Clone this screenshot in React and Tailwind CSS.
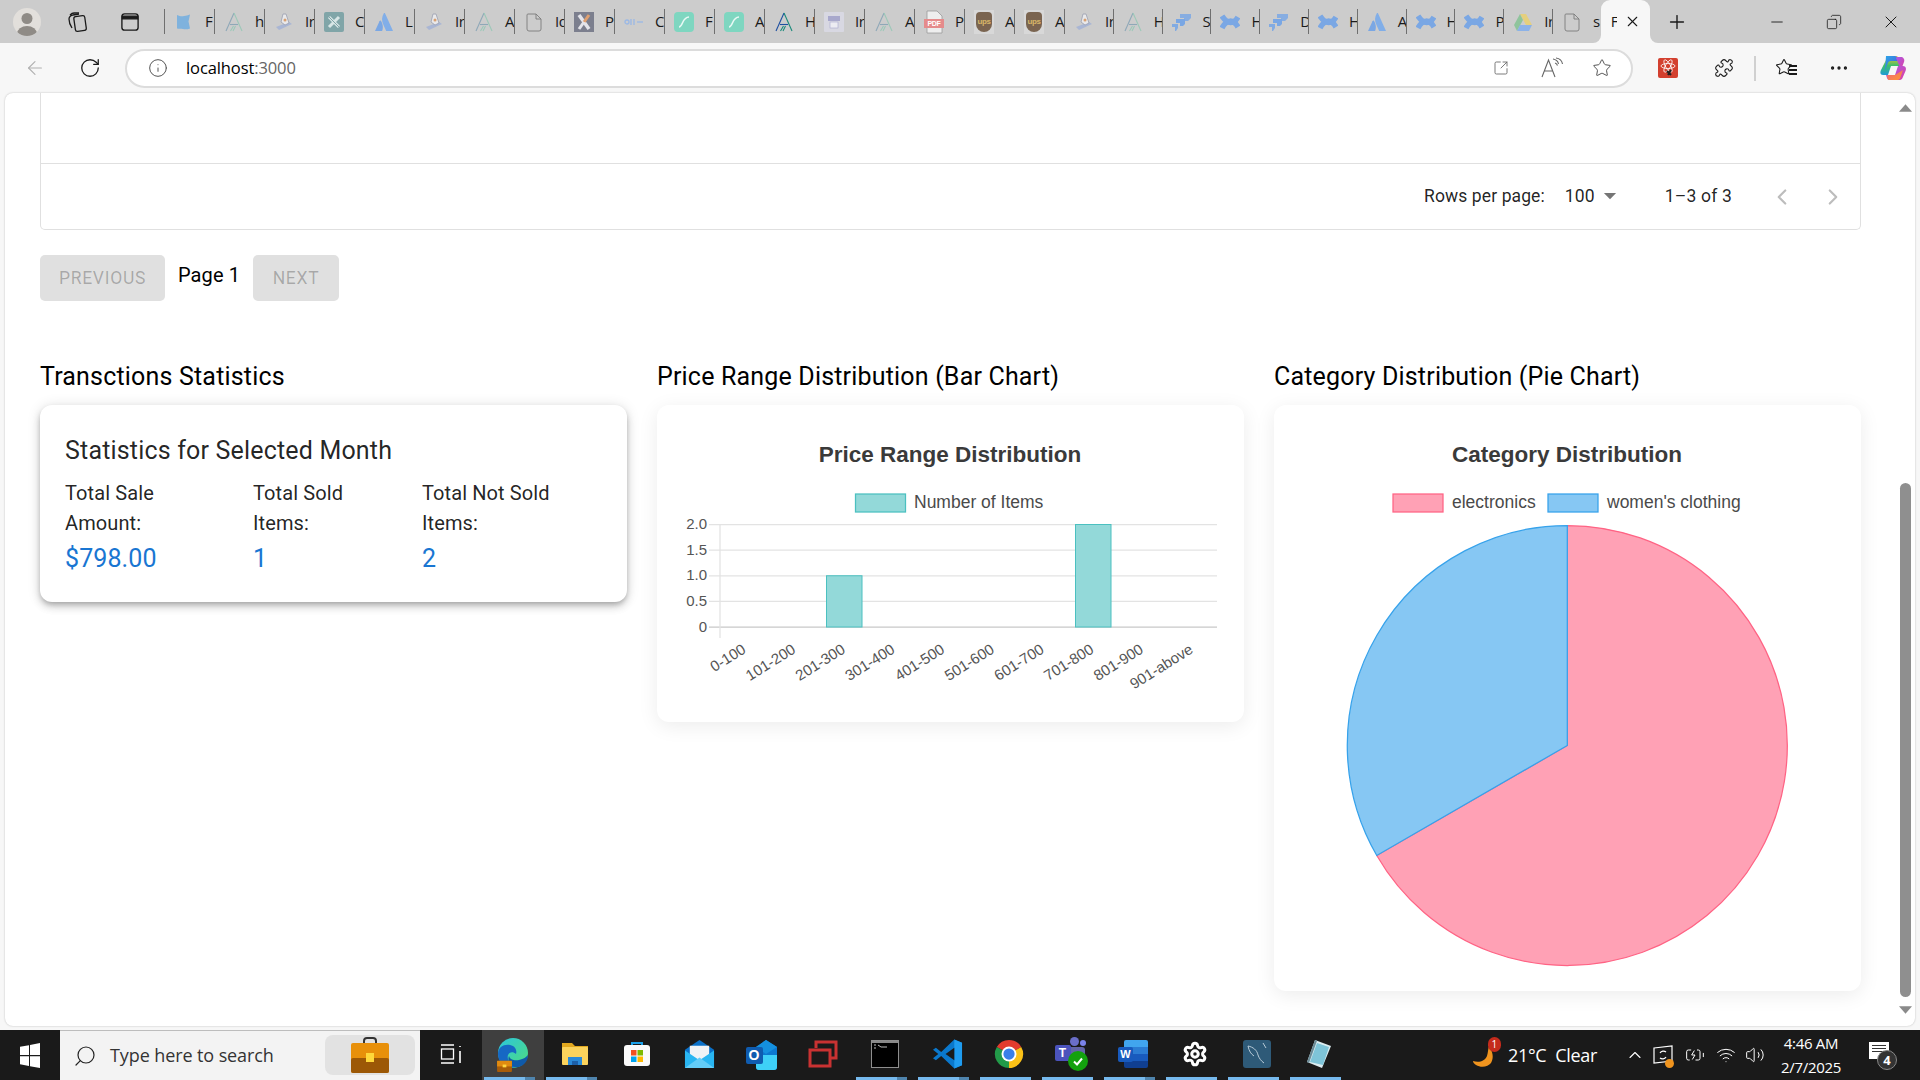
import React from "react";
import {
  ArrowLeft, RotateCw, Info, SquareArrowOutUpRight, Star, Puzzle, MoreHorizontal, Search,
  ChevronLeft, ChevronRight, Plus, X, Minus, Copy, ChevronUp, Wifi, Volume2, BatteryCharging, Settings,
} from "lucide-react";

const Flag = () => (
  <svg viewBox="0 0 20 20" className="w-5 h-5"><path d="M3 3c3 1.500 5 1.500 7 1s4-.5 6-1.500l-1.500 7 1.500 7c-3 1-5 1-7 .5s-4 0-6-.5z" fill="#7fb2dd" /></svg>
);
const ALogo = ({ c = "#8fa8b8", d = "#9cc8b8" }) => (
  <svg viewBox="0 0 20 20" className="w-5 h-5" fill="none" strokeWidth="1.100">
    <path d="M10 1 L2 19" stroke={c} /><path d="M10 1 L18 19" stroke={d} />
    <path d="M6 12.500h8" stroke={c} /><path d="M6.500 19l3-5M9 19l2.500-5" stroke={d} />
  </svg>
);
const Flask = () => (
  <svg viewBox="0 0 20 20" className="w-5 h-5">
    <path d="M2 15l13-5 3 2-13 6z" fill="#a9b6d4" />
    <path d="M9 2h3l3 9-4 2-4-3z" fill="#e8e8ea" stroke="#9a9fb0" strokeWidth=".8" />
    <circle cx="11" cy="8" r="1.500" fill="#d8a070" />
  </svg>
);
const XSquare = () => (
  <svg viewBox="0 0 20 20" className="w-5 h-5">
    <rect width="20" height="20" rx="2" fill="#80a5a8" />
    <path d="M5 5l10 10M15 5L5 15" stroke="#d8e6e6" strokeWidth="3" />
    <path d="M5 5l10 10" stroke="#80a5a8" strokeWidth="1" />
  </svg>
);
const Atl = () => (
  <svg viewBox="0 0 20 20" className="w-5 h-5">
    <path d="M7 9c-.5-.6-1-.5-1.500.3L1 19h7c1-2 1.500-6-1-10z" fill="#7aa7e4" />
    <path d="M10 1c-2.500 4-2.500 8-.5 12l2.700 6H19L11 1.300c-.3-.5-.7-.5-1-.3z" fill="#81aee8" />
  </svg>
);
const Doc = () => (
  <svg viewBox="0 0 20 20" className="w-5 h-6" fill="none" stroke="#7c7c7c" strokeWidth=".9">
    <path d="M4 2h8l5 5v10a2 2 0 0 1-2 2H5a2 2 0 0 1-2-2V3a1 1 0 0 1 1-1z" /><path d="M12 2v5h5" />
  </svg>
);
const XGray = () => (
  <svg viewBox="0 0 20 20" className="w-5 h-5">
    <rect width="20" height="20" fill="#7c7f8e" />
    <path d="M5 3l10 14" stroke="#e4e4ea" strokeWidth="3.500" />
    <path d="M15 3L10 10" stroke="#e0a070" strokeWidth="3" /><path d="M10 10l-5 7" stroke="#e4e4ea" strokeWidth="3" />
  </svg>
);
const Dots = () => (
  <svg viewBox="0 0 20 20" className="w-5 h-5" fill="none" stroke="#9ab8e6" strokeWidth="1.300">
    <circle cx="3" cy="10" r="2" /><path d="M7 7v6M10 7v6" /><path d="M13 10h6" />
  </svg>
);
const SGreen = () => (
  <svg viewBox="0 0 20 20" className="w-5 h-6">
    <rect width="20" height="20" y="0" rx="4" fill="#7ed6c0" />
    <path d="M5 15c4 0 3-10 10-10" fill="none" stroke="#e8f8f4" strokeWidth="1.600" />
  </svg>
);
const Robot = () => (
  <svg viewBox="0 0 20 20" className="w-5 h-5">
    <rect width="20" height="20" rx="1" fill="#d8d8e2" />
    <rect x="4" y="4" width="12" height="5" fill="#a8a8cc" /><rect x="6" y="10" width="8" height="6" fill="#ececf2" stroke="#a8a8cc" strokeWidth=".6" />
  </svg>
);
const Pdf = () => (
  <div className="relative w-5 h-6">
    <svg viewBox="0 0 20 24" className="w-5 h-6"><path d="M3 1h10l5 5v17H3z" fill="#eee" stroke="#999" strokeWidth=".8" /></svg>
    <div className="absolute left-0 top-[9px] w-5 h-[9px] bg-[#e58b8b] text-white text-[7px] leading-[9px] font-bold text-center font-['Liberation_Sans',sans-serif]">PDF</div>
  </div>
);
const Ups = () => (
  <div className="w-5 h-6 bg-[#d8d8d8] flex items-center justify-center">
    <div className="w-4 h-5 rounded-b-lg rounded-t-sm bg-[#7a6450] text-[#d8b668] text-[8px] leading-5 font-bold text-center font-['Liberation_Sans',sans-serif]">ups</div>
  </div>
);
const Arrows = () => (
  <svg viewBox="0 0 20 20" className="w-5 h-5" fill="#7aa7e4">
    <path d="M8 2h11v4l-3 3h-4V6H8z" opacity=".85" /><path d="M4 7h9v5l-2 2H8v-3H4z" /><path d="M0 12h6v4l-2 3H3v-4H0z" opacity=".9" />
  </svg>
);
const Conf = () => (
  <svg viewBox="0 0 20 20" className="w-5 h-5" fill="none" stroke="#7aa7e4" strokeWidth="5.500">
    <path d="M2 16c5-9 11-9 16-1" /><path d="M2 4c6 9 12 8 16 1" />
  </svg>
);
const Drive = () => (
  <svg viewBox="0 0 20 20" className="w-5 h-5">
    <path d="M7 2h6l6 11h-6z" fill="#e5cf7d" /><path d="M7 2l3 6-6 11-3-6z" fill="#8fc49c" /><path d="M4 19l3-6h12l-3 6z" fill="#8cb2e8" />
  </svg>
);

const tabs = [
  [Flag, "F"], [ALogo, "h"], [Flask, "Ir"], [XSquare, "C"], [Atl, "L"], [Flask, "Ir"], [ALogo, "A"], [Doc, "Id"], [XGray, "P"],
  [Dots, "C"], [SGreen, "F"], [SGreen, "A"], ["A2", "H"], [Robot, "Ir"], [ALogo, "A"], [Pdf, "P"], [Ups, "A"], [Ups, "A"],
  [Flask, "Ir"], [ALogo, "H"], [Arrows, "S"], [Conf, "H"], [Arrows, "D"], [Conf, "H"], [Atl, "A"], [Conf, "H"], [Conf, "P"], [Drive, "Ir"], [Doc, "s"],
];

function TabStrip() {
  return (
    <div className="h-[43px] bg-[#cccccc] flex items-center shrink-0 relative">
      <div className="w-[54px] flex justify-center">
        <svg viewBox="0 0 28 28" className="w-7 h-7">
          <defs><clipPath id="av"><circle cx="14" cy="14" r="14" /></clipPath></defs>
          <circle cx="14" cy="14" r="14" fill="#e2dfdb" />
          <g clipPath="url(#av)" fill="#8f8b86"><circle cx="14" cy="10.500" r="5.500" /><ellipse cx="14" cy="26" rx="10" ry="8" /></g>
        </svg>
      </div>
      <div className="w-[46px] flex justify-center">
        <svg viewBox="0 0 24 24" className="w-6 h-6" fill="none" stroke="#1a1a1a" strokeWidth="1.300">
          <rect x="9.500" y="6" width="11" height="15" rx="2" transform="rotate(-8 15 13)" />
          <path d="M7 18c-2-3-3-6-3-9 0-2 2-4 4-4l6-1" /><path d="M5 5c1-1 2-2 4-2l5 0" />
        </svg>
      </div>
      <div className="w-[60px] flex justify-center">
        <svg viewBox="0 0 20 20" className="w-[18px] h-[18px]" fill="none" stroke="#1a1a1a" strokeWidth="1.500">
          <rect x="1" y="1" width="18" height="18" rx="3" /><path d="M1.500 3.500h17v3h-17z" fill="#1a1a1a" />
        </svg>
      </div>
      <div className="w-[4px]" />
      {tabs.map(([Ic, t], i) => (
        <div key={i} className={`${i < 18 ? "w-[50px]" : "w-[48.800px]"} h-full flex items-center overflow-hidden shrink-0 font-['Open_Sans',sans-serif] text-[15px] tracking-[-0.400px] text-[#1a1a1a]`}>
          <span className="w-px h-[25px] bg-[#6f6f6f] shrink-0" />
          <span className="ml-[9px] w-5 flex justify-center shrink-0">
            {Ic === "A2" ? <ALogo c="#1e4fa0" d="#1a8a7a" /> : <Ic />}
          </span>
          <span className="ml-[11px] whitespace-nowrap">{t}</span>
        </div>
      ))}
      <div className="w-[49px] h-full bg-[#f7f7f7] rounded-t-[9px] flex items-center shrink-0 relative font-['Open_Sans',sans-serif] text-[15px] text-[#1a1a1a]">
        <span className="ml-[10px] w-[6px] overflow-hidden">F</span>
        <X className="ml-[7px] w-[17px] h-[17px]" strokeWidth={1.500} />
        <div className="absolute -left-[8px] bottom-0 w-2 h-2 bg-[#f7f7f7]"><div className="w-2 h-2 bg-[#cccccc] rounded-br-[8px]" /></div>
        <div className="absolute -right-[8px] bottom-0 w-2 h-2 bg-[#f7f7f7]"><div className="w-2 h-2 bg-[#cccccc] rounded-bl-[8px]" /></div>
      </div>
      <div className="w-[55px] flex justify-center"><Plus className="w-[22px] h-[22px] text-[#1a1a1a]" strokeWidth={1.500} /></div>
      <div className="flex-1" />
      <div className="w-[57px] flex justify-center"><Minus className="w-[18px] h-[18px] text-[#1a1a1a]" strokeWidth={1.200} /></div>
      <div className="w-[57px] flex justify-center"><Copy className="w-4 h-4 text-[#1a1a1a] -scale-x-100" strokeWidth={1.200} /></div>
      <div className="w-[58px] flex justify-center"><X className="w-5 h-5 text-[#1a1a1a]" strokeWidth={1.200} /></div>
    </div>
  );
}

function Toolbar() {
  return (
    <div className="h-[50px] bg-[#f7f7f7] flex items-center shrink-0">
      <div className="w-[70px] flex justify-center"><ArrowLeft className="w-[22px] h-[22px] text-[#b0b0b0]" strokeWidth={1.200} /></div>
      <div className="w-[40px] flex justify-center"><RotateCw className="w-[22px] h-[22px] text-[#1a1a1a]" strokeWidth={1.400} /></div>
      <div className="ml-[15px] w-[1508px] h-[39px] rounded-full border-2 border-[#dcdcdc] bg-white flex items-center">
        <Info className="ml-[21px] w-5 h-5 text-[#555]" strokeWidth={1.200} />
        <span className="ml-[18px] font-['Open_Sans',sans-serif] text-[16.500px] text-black tracking-[-0.100px]">localhost<span className="text-[#666]">:3000</span></span>
        <div className="flex-1" />
        <SquareArrowOutUpRight className="w-[16px] h-[16px] text-[#666]" strokeWidth={1.300} />
        <svg viewBox="0 0 24 22" className="ml-[31px] w-[24px] h-[22px]" fill="none" stroke="#666" strokeWidth="1.100">
          <path d="M2 20L8.500 3 15 20M4.500 14h8" /><path d="M13 2c3 .5 5 2.500 5.500 5M15 6c1.500.3 2 1 2.500 2.500M16 1c4 .5 6 3 6.500 6" />
        </svg>
        <Star className="ml-[28px] w-5 h-5 text-[#555]" strokeWidth={1.200} />
        <div className="w-[19px]" />
      </div>
      <div className="ml-[25px] w-[20px] h-[20px] rounded-[2px] bg-[#d3402f] flex items-center justify-center">
        <svg viewBox="0 0 20 20" className="w-5 h-5" fill="none" stroke="#fff" strokeWidth=".8">
          <ellipse cx="10" cy="8" rx="7" ry="2.500" /><ellipse cx="10" cy="8" rx="7" ry="2.500" transform="rotate(60 10 8)" /><ellipse cx="10" cy="8" rx="7" ry="2.500" transform="rotate(120 10 8)" />
          <path d="M9 13l4 4M13 12l-3 5" stroke="#222" strokeWidth="2" />
        </svg>
      </div>
      <div className="w-[36px]" />
      <Puzzle className="w-[20px] h-[20px] text-[#1a1a1a]" strokeWidth={1.300} />
      <div className="ml-[20px] w-[2px] h-[25px] bg-[#d0d0d0]" />
      <div className="ml-[19px] relative w-5 h-5">
        <Star className="w-[18px] h-[18px] text-[#1a1a1a]" strokeWidth={1.400} />
        <span className="absolute right-[-2px] top-[7px] w-[8px] h-[1.500px] bg-[#1a1a1a]" />
        <span className="absolute right-[-2px] top-[11px] w-[8px] h-[1.500px] bg-[#1a1a1a]" />
        <span className="absolute right-[-2px] top-[15px] w-[8px] h-[1.500px] bg-[#1a1a1a]" />
      </div>
      <MoreHorizontal className="ml-[33px] w-[22px] h-[22px] text-[#1a1a1a]" strokeWidth={1.600} />
      <div className="ml-[29px]">
        <svg viewBox="0 0 28 28" className="w-[28px] h-[28px]">
          <defs>
            <linearGradient id="cp1" x1="0" y1="0" x2="1" y2="1"><stop offset="0" stopColor="#2aa7e8" /><stop offset="1" stopColor="#4a55d8" /></linearGradient>
            <linearGradient id="cp2" x1="0" y1="0" x2="0" y2="1"><stop offset="0" stopColor="#ffc22e" /><stop offset=".5" stopColor="#3fc06a" /><stop offset="1" stopColor="#1f9ad6" /></linearGradient>
            <linearGradient id="cp3" x1="0" y1="0" x2="1" y2="1"><stop offset="0" stopColor="#a65be8" /><stop offset="1" stopColor="#e040a0" /></linearGradient>
            <linearGradient id="cp4" x1="0" y1="0" x2="1" y2="1"><stop offset="0" stopColor="#f06080" /><stop offset="1" stopColor="#ff9a30" /></linearGradient>
          </defs>
          <path d="M9 2h8c1 0 2 .5 2.500 2L22 12H12L9 21H4c-3 0-3-3-2-5z" fill="url(#cp2)" />
          <path d="M7 2h9c1 0 2 .8 2.500 2l1 3H12c-2 0-3 1-3.500 3L6 16z" fill="url(#cp1)" />
          <path d="M17 4l5 12 3-8c1-3-1-5-3-5h-4z" fill="url(#cp3)" />
          <path d="M20 26h-9c-2 0-2.500-1-3-2l-1-3h9l3-9h5c3 0 3.500 3 2.500 5l-3 7c-.5 1.500-2 2-3.500 2z" fill="url(#cp3)" />
          <path d="M10 26h8c2 0 3-1 3.500-3L24 16l-8 5H8c0 3 1 5 2 5z" fill="url(#cp4)" />
        </svg>
      </div>
    </div>
  );
}

function Pagination() {
  return (
    <div className="flex-1 flex items-center justify-end text-[17.500px] text-[rgba(0,0,0,0.87)]">
      <span className="tracking-[0.100px]">Rows per page:</span>
      <span className="ml-[20px] tracking-[0.100px]">100</span>
      <svg viewBox="0 0 14 8" className="ml-[8px] w-[14px] h-[7px]"><path d="M0 0h14L7 7z" fill="#757575" /></svg>
      <span className="ml-[48px] tracking-[0.200px]">1–3 of 3</span>
      <ChevronLeft className="ml-[37px] w-[26px] h-[26px] text-[#bdbdbd]" strokeWidth={2} />
      <ChevronRight className="ml-[25px] mr-[14px] w-[26px] h-[26px] text-[#bdbdbd]" strokeWidth={2} />
    </div>
  );
}

const labels = ["0-100", "101-200", "201-300", "301-400", "401-500", "501-600", "601-700", "701-800", "801-900", "901-above"];

function BarChart() {
  const x0 = 720, x1 = 1217, top = 524.500, bot = 627, step = (bot - top) / 4;
  const ticks = ["2.0", "1.5", "1.0", "0.5", "0"];
  const bw = 49.700;
  return (
    <svg viewBox="657 405 587 317" className="w-full h-[317px] block" fontFamily="'Liberation Sans', sans-serif">
      <text x="950" y="461.500" textAnchor="middle" fontSize="22.500" fontWeight="700" fill="#3a3a3a">Price Range Distribution</text>
      <rect x="855.500" y="494" width="50" height="18" fill="#93d9d9" stroke="#4bc0c0" strokeWidth="1.250" />
      <text x="914" y="507.500" fontSize="17.500" fill="#4a4a4a">Number of Items</text>
      {ticks.map((t, i) => (
        <g key={t}>
          <line x1="709" x2={x1} y1={top + i * step} y2={top + i * step} stroke={i === 4 ? "#c8c8c8" : "#e3e3e3"} strokeWidth="1.250" />
          <text x="707" y={top + i * step + 4.500} textAnchor="end" fontSize="15" fill="#555">{t}</text>
        </g>
      ))}
      <line x1={x0} x2={x0} y1={top} y2={bot + 11} stroke="#e3e3e3" strokeWidth="1.250" />
      <rect x="826.500" y={top + 2 * step} width="35.500" height={2 * step} fill="#93d9d9" stroke="#4bc0c0" strokeWidth="1" />
      <rect x="1075.500" y={top} width="35.500" height={4 * step} fill="#93d9d9" stroke="#4bc0c0" strokeWidth="1" />
      {labels.map((l, i) => {
        const cx = x0 + (i + 0.5) * bw + 2;
        return (
          <text key={l} x={cx} y="652" textAnchor="end" fontSize="15" fill="#555" transform={`rotate(-32 ${cx} 652)`}>{l}</text>
        );
      })}
    </svg>
  );
}

function PieChart() {
  const cx = 1567.300, cy = 745.500, r = 220;
  const px = cx + r * Math.sin((240 * Math.PI) / 180);
  const py = cy - r * Math.cos((240 * Math.PI) / 180);
  return (
    <svg viewBox="1274 405 587 586" className="w-full h-[586px] block" fontFamily="'Liberation Sans', sans-serif">
      <text x="1567" y="461.500" textAnchor="middle" fontSize="22.500" fontWeight="700" fill="#3a3a3a">Category Distribution</text>
      <rect x="1393" y="494" width="50" height="18" fill="#ffa1b5" stroke="#ff6384" strokeWidth="1.250" />
      <text x="1452" y="507.500" fontSize="17.500" fill="#4a4a4a">electronics</text>
      <rect x="1548" y="494" width="50" height="18" fill="#86c7f3" stroke="#36a2eb" strokeWidth="1.250" />
      <text x="1607" y="507.500" fontSize="17.500" fill="#4a4a4a">women's clothing</text>
      <path d={`M${cx} ${cy}L${cx} ${cy - r}A${r} ${r} 0 1 1 ${px} ${py}Z`} fill="#ffa1b5" stroke="#ff6384" strokeWidth="1.250" />
      <path d={`M${cx} ${cy}L${px} ${py}A${r} ${r} 0 0 1 ${cx} ${cy - r}Z`} fill="#86c7f3" stroke="#36a2eb" strokeWidth="1.250" />
    </svg>
  );
}

function Main() {
  return (
    <div className="flex-1 min-w-0 pl-[35px] pr-[34px] font-['Roboto',sans-serif]">
      <div className="h-[137px] border-x border-b border-[#e0e0e0] rounded-b-[5px] flex flex-col">
        <div className="h-[71px] border-b border-[#e0e0e0] shrink-0" />
        <Pagination />
      </div>
      <div className="mt-[25px] flex items-start">
        <button className="w-[125px] h-[46px] rounded-[5px] bg-[#e0e0e0] text-[rgba(0,0,0,0.26)] text-[17.500px] font-normal tracking-[0.700px]">PREVIOUS</button>
        <span className="ml-[13px] mt-[5px] w-[75px] whitespace-nowrap text-[20px] leading-[30px] tracking-[0.100px] text-black">Page 1</span>
        <button className="w-[86px] h-[46px] rounded-[5px] bg-[#e0e0e0] text-[rgba(0,0,0,0.26)] text-[17.500px] font-normal tracking-[0.700px]">NEXT</button>
      </div>
      <div className="mt-[56px] grid grid-cols-3 gap-x-[30px]">
        <div>
          <h2 className="text-[25px] leading-[40px] tracking-[0.180px] text-black mb-[8px]">Transctions Statistics</h2>
          <div className="bg-white rounded-[12px] shadow-[0_3px_5px_-1px_rgba(0,0,0,0.2),0_5px_8px_0_rgba(0,0,0,0.14),0_1px_14px_0_rgba(0,0,0,0.12)] px-[25px] pt-[26px] pb-[23px] text-[rgba(0,0,0,0.87)]">
            <div className="text-[25px] leading-[40px] tracking-[0.180px] mb-[7px]">Statistics for Selected Month</div>
            <div className="grid grid-cols-[188px_169px_1fr]">
              {[["Total Sale", "Amount:", "$798.00"], ["Total Sold", "Items:", "1"], ["Total Not Sold", "Items:", "2"]].map((c) => (
                <div key={c[0]}>
                  <div className="text-[20px] leading-[30px] tracking-[0.100px]">{c[0]}<br />{c[1]}</div>
                  <div className="mt-[1px] text-[25px] leading-[40px] tracking-[0.100px] text-[#1976d2]">{c[2]}</div>
                </div>
              ))}
            </div>
          </div>
        </div>
        <div>
          <h2 className="text-[25px] leading-[40px] tracking-[0.180px] text-black mb-[8px]">Price Range Distribution (Bar Chart)</h2>
          <div className="bg-white rounded-[12px] shadow-[0_4px_20px_rgba(0,0,0,0.08)] overflow-hidden"><BarChart /></div>
        </div>
        <div>
          <h2 className="text-[25px] leading-[40px] tracking-[0.180px] text-black mb-[8px]">Category Distribution (Pie Chart)</h2>
          <div className="bg-white rounded-[12px] shadow-[0_4px_20px_rgba(0,0,0,0.08)] overflow-hidden"><PieChart /></div>
        </div>
      </div>
    </div>
  );
}

function Scrollbar() {
  return (
    <div className="w-[20px] shrink-0 flex flex-col items-center pt-[11px] pb-[12px]">
      <svg viewBox="0 0 14 8" className="w-[13px] h-[8px]"><path d="M7 0l7 8H0z" fill="#8a8a8a" /></svg>
      <div className="flex-1 w-full flex flex-col justify-end items-center">
        <div className="w-[11px] h-[514px] rounded-full bg-[#8f8f8f] mb-[9px]" />
      </div>
      <svg viewBox="0 0 14 8" className="w-[13px] h-[8px]"><path d="M0 0h14L7 8z" fill="#8a8a8a" /></svg>
    </div>
  );
}

const TB = {
  view: () => (
    <svg viewBox="0 0 24 24" className="w-6 h-6" fill="none" stroke="#fff" strokeWidth="1.300">
      <path d="M2 3h13M2 21h13" /><rect x="2.500" y="7" width="12" height="10" /><path d="M21 4v1M21 9v12" strokeWidth="1.600" />
    </svg>
  ),
  edge: () => (
    <div className="relative w-[32px] h-[36px]">
      <svg viewBox="0 0 32 36" className="w-[32px] h-[36px]">
        <defs>
          <linearGradient id="eg" x1="0" y1="0" x2="1" y2="1"><stop offset="0" stopColor="#2cc6dd" /><stop offset="1" stopColor="#4fdc7c" /></linearGradient>
        </defs>
        <circle cx="16" cy="17" r="15" fill="url(#eg)" />
        <path d="M1 18c0-7 6-10 12-9 6 1 7 6 6 9-3-3-7-2-8 1-1 3 0 8 8 12-9 3-18-3-18-13z" fill="#1668c4" />
        <path d="M31 19c0 8-7 13-13 12-4-1-8-6-6-11 1 4 6 5 10 4 5-1 7-3 9-5z" fill="#0f5aaa" />
      </svg>
      <svg viewBox="0 0 16 14" className="absolute left-0 bottom-0 w-[15px] h-[13px]">
        <rect y="2" width="16" height="12" rx="1" fill="#a85c08" /><rect y="2" width="16" height="6" fill="#e08a10" /><rect x="6" y="6" width="4" height="3" fill="#ffd33c" />
      </svg>
    </div>
  ),
  files: () => (
    <svg viewBox="0 0 28 28" className="w-[28px] h-[28px]">
      <path d="M1 3h10l3 3h13v4H1z" fill="#e2a81f" /><rect x="1" y="7" width="26" height="18" rx="1" fill="#fbd35c" />
      <path d="M7 25v-8h14v8h-4v-4h-6v4z" fill="#2a8ad8" /><path d="M11 21h6v4h-6z" fill="#1c5fa8" />
    </svg>
  ),
  store: () => (
    <svg viewBox="0 0 28 28" className="w-[28px] h-[28px]">
      <path d="M9 5V3h10v2" fill="none" stroke="#1aa0e8" strokeWidth="2" />
      <rect x="1" y="5" width="26" height="21" rx="3" fill="#fafafa" />
      <rect x="8" y="10" width="5.500" height="5.500" fill="#f25022" /><rect x="14.500" y="10" width="5.500" height="5.500" fill="#7fba00" />
      <rect x="8" y="16.500" width="5.500" height="5.500" fill="#00a4ef" /><rect x="14.500" y="16.500" width="5.500" height="5.500" fill="#ffb900" />
    </svg>
  ),
  mail: () => (
    <svg viewBox="0 0 32 32" className="w-[31px] h-[31px]">
      <path d="M16 2L31 12v19H1V12z" fill="#0a70c8" /><path d="M6 8h20v10l-10 6-10-6z" fill="#f0f3f6" />
      <path d="M1 13l15 10 15-10v18H1z" fill="#29b6f2" /><path d="M1 31l15-11 15 11z" fill="#63cdf8" />
    </svg>
  ),
  outlook: () => (
    <div className="relative w-[31px] h-[32px]">
      <svg viewBox="0 0 31 32" className="w-[31px] h-[32px]">
        <path d="M20 2l11 7v20a3 3 0 0 1-3 3H13a3 3 0 0 1-3-3V9z" fill="#0c78d0" /><path d="M10 17h21v12a3 3 0 0 1-3 3H13a3 3 0 0 1-3-3z" fill="#3ed0f8" /><path d="M20 2l11 7-11 7-10-7z" fill="#1490df" />
      </svg>
      <div className="absolute left-0 top-[9px] w-[17px] h-[17px] bg-[#0f5cb0] rounded-[2px] text-white text-[14px] leading-[17px] font-bold text-center font-['Liberation_Sans',sans-serif]">O</div>
    </div>
  ),
  red: () => (
    <svg viewBox="0 0 30 28" className="w-[30px] h-[28px]" fill="none" stroke="#c93232" strokeWidth="3">
      <rect x="2" y="10" width="20" height="16" /><path d="M8 8V2h20v16h-5" />
    </svg>
  ),
  term: () => (
    <div className="w-[28px] h-[28px] bg-black border border-[#8e8e8e] relative">
      <div className="h-[2px] bg-[#888]" />
      <svg viewBox="0 0 26 10" className="w-[26px] h-[10px]" fill="none" stroke="#bbb" strokeWidth="1"><path d="M2 2h2M2 5h2M6 2l3 2h6" /></svg>
    </div>
  ),
  vs: () => (
    <svg viewBox="0 0 32 32" className="w-[31px] h-[36px]">
      <path d="M23 1L9.500 14 4 9.500 1 11.500 6.500 16 1 20.500l3 2L9.500 18 23 31l8-3.500V4.500z" fill="#0a78cc" />
      <path d="M23 1l8 3.500v23L23 31z" fill="#1f9cf0" /><path d="M23 9.500L14 16l9 6.500z" fill="#1a1a1a" />
    </svg>
  ),
  chrome: () => (
    <svg viewBox="0 0 32 32" className="w-[30px] h-[30px]">
      <path d="M16 16L3 8.500A15 15 0 0 1 29 8.500z" fill="#e33b2e" /><path d="M16 16L29 8.500A15 15 0 0 1 16 31z" fill="#fbc117" />
      <path d="M16 16L16 31A15 15 0 0 1 3 8.500z" fill="#229a49" /><circle cx="16" cy="16" r="8" fill="#fff" /><circle cx="16" cy="16" r="6" fill="#3a7fe8" />
    </svg>
  ),
  teams: () => (
    <div className="relative w-[33px] h-[34px]">
      <div className="absolute left-[15px] top-0 w-[9px] h-[9px] rounded-full bg-[#6a6ec8]" />
      <div className="absolute right-[2px] top-[3px] w-[6px] h-[6px] rounded-full bg-[#7b83eb]" />
      <div className="absolute left-[8px] top-[10px] w-[22px] h-[14px] rounded-[3px] bg-[#6264a7]" />
      <div className="absolute left-0 top-[8px] w-[16px] h-[16px] rounded-[2px] bg-[#4b53bc] text-white text-[12px] leading-[16px] font-bold text-center font-['Liberation_Sans',sans-serif]">T</div>
      <div className="absolute right-0 bottom-0 w-[20px] h-[20px] rounded-full bg-[#13a10e] flex items-center justify-center">
        <svg viewBox="0 0 12 12" className="w-3 h-3" fill="none" stroke="#fff" strokeWidth="2"><path d="M2 6.500l3 3 5-6" /></svg>
      </div>
    </div>
  ),
  word: () => (
    <div className="relative w-[30px] h-[28px]">
      <div className="absolute right-0 top-0 w-[24px] h-[28px] rounded-[2px] overflow-hidden flex flex-col">
        <div className="flex-1 bg-[#41a5ee]" /><div className="flex-1 bg-[#2b7cd3]" /><div className="flex-1 bg-[#185abd]" /><div className="flex-1 bg-[#103f91]" />
      </div>
      <div className="absolute left-0 top-[7px] w-[15px] h-[15px] bg-[#185abd] rounded-[2px] text-white text-[11px] leading-[15px] font-bold text-center font-['Liberation_Sans',sans-serif]">W</div>
    </div>
  ),
  gear: () => <Settings className="w-[26px] h-[26px] text-white" strokeWidth={2.800} />,
  mysql: () => (
    <div className="w-[28px] h-[28px] rounded-[3px] bg-[#2e5a78] relative">
      <svg viewBox="0 0 28 28" className="w-[28px] h-[28px]" fill="none" stroke="#b8cbd8" strokeWidth="1"><path d="M5 6c5 1 9 4 10 9 1 3 3 6 6 8M5 6c1 5 3 8 6 10M20 3l3 5" /></svg>
    </div>
  ),
  notepad: () => (
    <svg viewBox="0 0 28 32" className="w-[28px] h-[32px]">
      <path d="M10 2l16 6-9 22L2 24z" fill="#dcecf0" /><path d="M2 24l8-22 2 .8L4 25z" fill="#6a8a96" /><path d="M5 24l7-19 12 4-6 18z" fill="#7ec4d8" />
    </svg>
  ),
};

const taskItems = [
  ["view", 0, 0], ["edge", 2, 1], ["files", 1, 1], ["store", 0, 0], ["mail", 0, 0], ["outlook", 0, 0], ["red", 0, 0], ["term", 1, 1],
  ["vs", 1, 1], ["chrome", 1, 0], ["teams", 1, 0], ["word", 1, 1], ["gear", 1, 0], ["mysql", 1, 0], ["notepad", 1, 0],
];

function Taskbar() {
  return (
    <div className="h-[50px] bg-[#1a1a1a] flex items-stretch shrink-0">
      <div className="w-[60px] flex items-center justify-center">
        <svg viewBox="0 0 20 20" className="w-5 h-[25px]" preserveAspectRatio="none" fill="#fff">
          <path d="M0 3l9-1.300V9.500H0zM10 1.500L20 0v9.500H10zM0 10.500h9v7.800L0 17zM10 10.500h10V20l-10-1.500z" />
        </svg>
      </div>
      <div className="w-[360px] bg-[#f3f3f3] border-t border-[#bdbdbd] flex items-center relative">
        <Search className="ml-[13px] w-6 h-6 text-[#222] -scale-x-100" strokeWidth={1.200} />
        <span className="ml-[13px] font-['Open_Sans',sans-serif] text-[18px] tracking-[-0.100px] text-[#333]">Type here to search</span>
        <div className="absolute left-[265px] top-[4px] w-[90px] h-[40px] rounded-[8px] bg-[#e2e2e2] flex items-center justify-center">
          <svg viewBox="0 0 38 36" className="w-[38px] h-[36px]">
            <path d="M13 8V4a3 3 0 0 1 3-3h6a3 3 0 0 1 3 3v4" fill="none" stroke="#333" strokeWidth="2" />
            <rect y="6" width="38" height="30" rx="2" fill="#e8900a" /><rect y="21" width="38" height="15" rx="2" fill="#9c5806" />
            <rect x="15" y="16" width="8" height="9" fill="#ffd83a" />
          </svg>
        </div>
      </div>
      {taskItems.map(([k, line, split]) => {
        const Ic = TB[k];
        return (
          <div key={k} className={`w-[62px] relative flex items-center justify-center ${line === 2 ? "bg-[#3f3f3f]" : ""}`}>
            <div className="-mt-[3px]"><Ic /></div>
            {line > 0 && (
              <div className="absolute left-[2px] bottom-0 w-[51px] h-[3px] flex">
                <div className={`h-full ${split ? "w-[41px]" : "w-[51px]"} bg-[#76b9ed]`} />
                {split ? <div className="h-full w-[10px] bg-[#4f84ad]" /> : null}
              </div>
            )}
          </div>
        );
      })}
      <div className="flex-1" />
      <div className="flex items-center font-['Open_Sans',sans-serif] text-white">
        <div className="relative w-[26px] h-[30px]">
          <svg viewBox="0 0 26 30" className="w-[26px] h-[30px]">
            <path d="M17 6c4 6 5 12 2 17-3 4-10 5-15 2-2-1-3-3-3-4 6 2 12 0 14-5 1-3 1-7 2-10z" fill="#f0941e" />
          </svg>
          <div className="absolute right-[-3px] top-[-3px] w-[13px] h-[15px] rounded-full bg-[#c42b1c] text-[10px] leading-[15px] text-center">1</div>
        </div>
        <span className="ml-[10px] text-[18px] tracking-[-0.300px] whitespace-pre">21°C  Clear</span>
        <ChevronUp className="ml-[28px] w-[20px] h-[20px]" strokeWidth={1.300} />
        <div className="ml-[8px] relative w-[20px] h-[20px]">
          <svg viewBox="0 0 20 20" className="w-5 h-5" fill="none" stroke="#fff" strokeWidth="1.200"><path d="M1 3l18-2v15l-18 2z" /><path d="M7 8a4 4 0 0 1 6-1M13 12a4 4 0 0 1-6 1" /></svg>
          <span className="absolute right-[-1px] bottom-[-3px] w-[9px] h-[9px] rounded-full bg-[#f0941e]" />
        </div>
        <BatteryCharging className="ml-[12px] w-[20px] h-[20px]" strokeWidth={1.200} />
        <Wifi className="ml-[11px] w-[20px] h-[20px]" strokeWidth={1.200} />
        <Volume2 className="ml-[9px] w-[20px] h-[20px]" strokeWidth={1.200} />
        <div className="ml-[9px] w-[74px] flex flex-col items-center text-[15px] leading-[24px] tracking-[-0.300px]">
          <span>4:46 AM</span><span>2/7/2025</span>
        </div>
        <div className="ml-[21px] mr-[29px] relative w-[22px] h-[30px]">
          <div className="absolute left-0 top-[2px] w-[20px] h-[17px] bg-white flex flex-col gap-[2px] pt-[3px] px-[3px]">
            <span className="h-px bg-[#333]" /><span className="h-px bg-[#333]" /><span className="h-px bg-[#333]" />
          </div>
          <div className="absolute left-[8px] top-[10px] w-[20px] h-[20px] rounded-full bg-[#333] border border-[#888] text-[13px] leading-[18px] font-bold text-center">4</div>
        </div>
      </div>
    </div>
  );
}

export default function App() {
  return (
    <div className="w-[1920px] h-[1080px] flex flex-col overflow-hidden bg-[#f7f7f7]">
      <TabStrip />
      <Toolbar />
      <div className="flex-1 min-h-0 px-[5px] pb-[4px] bg-[#f7f7f7]">
        <div className="h-full bg-white rounded-[8px] shadow-[0_0_2px_rgba(0,0,0,0.25)] flex overflow-hidden">
          <Main />
          <Scrollbar />
        </div>
      </div>
      <Taskbar />
    </div>
  );
}
